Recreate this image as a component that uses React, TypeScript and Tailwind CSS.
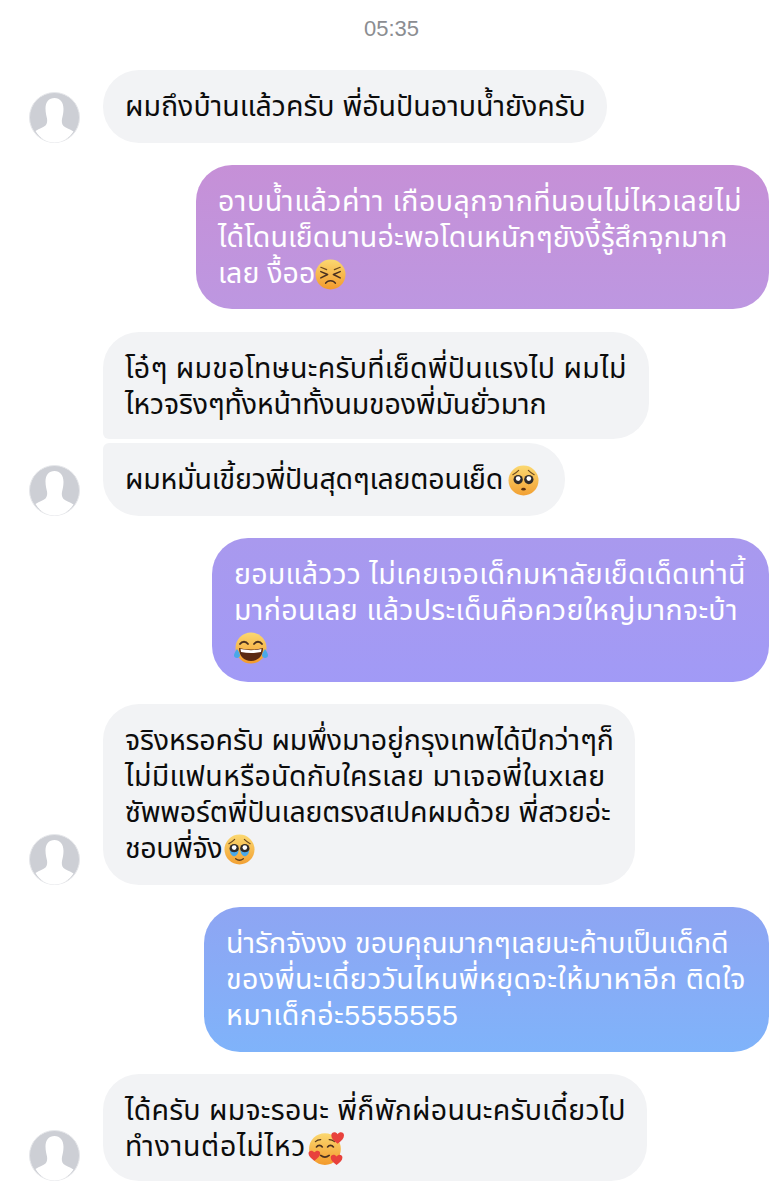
import type { ReactNode } from "react";

function Avatar() {
  return (
    <svg viewBox="0 0 51 51" className="w-[51px] h-[51px] shrink-0">
      <circle cx="25.5" cy="25.5" r="25" fill="#cdcfd5" stroke="#e6e7ea" strokeWidth="1" />
      <path
        d="M25.5 6c-5.500 0-9 4-9 10.500 0 4.500 1 7.500 1.500 10 .4 2.500.2 5-1.500 7-2 2-6 3-10 5.500C10.500 46 17.500 50.500 25.500 50.500S40.500 46 44.500 39.500c-4-2.500-8-3.500-10-5.500-1.700-2-1.900-4.500-1.500-7 .5-2.500 1.500-5.500 1.500-10C34.500 10 31 6 25.500 6z"
        fill="#fff"
      />
    </svg>
  );
}

function Persevere() {
  return (
    <svg viewBox="0 0 32 32" className="inline-block w-[31px] h-[31px] align-[-7px]">
      <defs>
        <linearGradient id="face1" x1="0" y1="0" x2="0" y2="1">
          <stop offset="0" stopColor="#fbd870" />
          <stop offset="1" stopColor="#f39a2c" />
        </linearGradient>
      </defs>
      <circle cx="16" cy="16" r="15.500" fill="url(#face1)" />
      <path d="M6 8.500l6 2.500M26 8.500l-6 2.500" fill="none" stroke="#6b4a20" strokeWidth="1.200" strokeLinecap="round" />
      <path d="M6 13l7 3-7 3.500M26 13l-7 3 7 3.500M11 25c2-3.500 8-3.500 10 0" fill="none" stroke="#4a3020" strokeWidth="1.600" strokeLinecap="round" strokeLinejoin="round" />
    </svg>
  );
}

function Pleading({ tears }: { tears?: boolean }) {
  return (
    <svg viewBox="0 0 32 32" className={`inline-block w-[31px] h-[31px] align-[-7px] ${tears ? "ml-[2px]" : "ml-[5px]"}`}>
      <defs>
        <linearGradient id="face2" x1="0" y1="0" x2="0" y2="1">
          <stop offset="0" stopColor="#fbd870" />
          <stop offset="1" stopColor="#f2a033" />
        </linearGradient>
      </defs>
      <circle cx="16" cy="16" r="15.500" fill="url(#face2)" />
      <path d="M5 10c2-1 4-2.500 6-4.500M27 10c-2-1-4-2.500-6-4.500" fill="none" stroke="#6b4a20" strokeWidth="1.200" strokeLinecap="round" />
      <circle cx="10.500" cy="15" r="4.800" fill="#2e2a2a" />
      <circle cx="21.500" cy="15" r="4.800" fill="#2e2a2a" />
      <circle cx="10.500" cy="14" r="2.400" fill="#fff" />
      <circle cx="21.500" cy="14" r="2.400" fill="#fff" />
      {tears ? (
        <>
          <path d="M6 16.500c2 3 7 3 9 0 0 4-2.500 6.500-4.500 6.500S6 20.500 6 16.500zM17 16.500c2 3 7 3 9 0 0 4-2.500 6.500-4.500 6.500S17 20.500 17 16.500z" fill="#4aa8e8" />
          <path d="M12 25.500c2.500 2 5.500 2 8 0" fill="none" stroke="#5a3a1a" strokeWidth="1.300" strokeLinecap="round" />
        </>
      ) : (
        <ellipse cx="16" cy="25" rx="2.300" ry="1.400" fill="#5a3010" />
      )}
    </svg>
  );
}

function Joy() {
  return (
    <svg viewBox="0 0 34 32" className="inline-block w-[34px] h-[32px] align-[-8px]">
      <defs>
        <linearGradient id="face3" x1="0" y1="0" x2="0" y2="1">
          <stop offset="0" stopColor="#fbd870" />
          <stop offset="1" stopColor="#f39a2c" />
        </linearGradient>
      </defs>
      <circle cx="17" cy="16" r="15.500" fill="url(#face3)" />
      <path d="M6 12c2-3 6-3 8 0M20 12c2-3 6-3 8 0" fill="none" stroke="#4a3020" strokeWidth="1.800" strokeLinecap="round" />
      <path d="M5 16c8 2 16 2 24 0 0 8-5 13-12 13S5 24 5 16z" fill="#5b2a12" />
      <path d="M6.500 17c7 1.500 14 1.500 21 0l-.5 3c-6.500 1.300-13.500 1.300-20 0z" fill="#fff" />
      <path d="M3 17c-2 3-3 5-3 6.500C0 25 1.300 26 3 26s3-1 3-2.500c0-2-1.500-4.500-3-6.500zM31 17c2 3 3 5 3 6.500 0 1.500-1.300 2.500-3 2.500s-3-1-3-2.500c0-2 1.500-4.500 3-6.500z" fill="#4aa8e8" />
    </svg>
  );
}

function Hearts() {
  return (
    <svg viewBox="0 0 34 34" className="inline-block w-[36px] h-[36px] align-[-10px] ml-[2px]">
      <defs>
        <linearGradient id="face4" x1="0" y1="0" x2="0" y2="1">
          <stop offset="0" stopColor="#fbd870" />
          <stop offset="1" stopColor="#f39a2c" />
        </linearGradient>
      </defs>
      <circle cx="16" cy="18" r="15" fill="url(#face4)" />
      <path d="M8 16c1.500-2 4-2 5.500 0M18.500 16c1.500-2 4-2 5.500 0" fill="none" stroke="#4a3020" strokeWidth="1.600" strokeLinecap="round" />
      <path d="M7 11c1.500-1.500 3-2 5-2M25 11c-1.500-1.500-3-2-5-2" fill="none" stroke="#5a3a1a" strokeWidth="1.200" strokeLinecap="round" />
      <path d="M12 24c2.500 2 5.500 2 8 0" fill="none" stroke="#4a3020" strokeWidth="1.600" strokeLinecap="round" />
      <path d="M28 13c-4-3-6-5-6-8 0-3 4-4 6-1 2-3 6-2 6 1 0 3-2 5-6 8z" fill="#e8413c" />
      <path d="M6 29c-3.500-2.500-5.500-4.500-5.500-7 0-2.700 3.500-3.500 5.500-1 2-2.500 5.500-1.700 5.500 1 0 2.500-2 4.500-5.500 7z" fill="#e8413c" />
      <path d="M27 33c-3.500-2.500-5.500-4.500-5.500-7 0-2.700 3.500-3.500 5.500-1 2-2.500 5.500-1.700 5.500 1 0 2.500-2 4.500-5.500 7z" fill="#e8413c" />
    </svg>
  );
}

function Incoming({ children, avatar = true, corner = "", size }: { children: ReactNode; avatar?: boolean; corner?: string; size: string }) {
  return (
    <div className="flex items-end pl-[29px] gap-[23px]">
      {avatar ? <Avatar /> : <div className="w-[51px] shrink-0" />}
      <div className={`bg-[#f2f3f5] text-[#0c0c0c] rounded-[36px] px-[22px] pt-[18px] ${size} ${corner}`}>
        {children}
      </div>
    </div>
  );
}

function Outgoing({ children, colors, size }: { children: ReactNode; colors: string; size: string }) {
  return (
    <div className="flex justify-end pr-[14px]">
      <div className={`bg-gradient-to-b ${colors} text-white rounded-[36px] px-[22px] pt-[18px] ${size}`}>
        {children}
      </div>
    </div>
  );
}

export default function App() {
  return (
    <div className="w-full h-[1200px] overflow-hidden bg-white text-[28.5px] leading-[36px] whitespace-nowrap font-['Liberation_Sans','Noto_Sans_Thai',sans-serif]">
      <div className="pt-[17px] h-[70px] text-center text-[22px] leading-[24px] text-[#8b8d91]">05:35</div>

      <Incoming size="w-[504px] h-[73px]">ผมถึงบ้านแล้วครับ พี่อันปันอาบน้ำยังครับ</Incoming>

      <div className="mt-[22px]">
        <Outgoing size="w-[573px] h-[144px]" colors="from-[#c690d7] to-[#bd97e1]">
          <div className="tracking-[0.5px]">อาบน้ำแล้วค่าา เกือบลุกจากที่นอนไม่ไหวเลยไม่</div>
          <div className="tracking-[0.13px]">ได้โดนเย็ดนานอ่ะพอโดนหนักๆยังงี้รู้สึกจุกมาก</div>
          <div className="h-[36px]">เลย งื้ออ<Persevere /></div>
        </Outgoing>
      </div>

      <div className="mt-[23px]">
        <Incoming avatar={false} size="w-[546px] h-[107px]" corner="rounded-bl-[6px]">
          <div className="tracking-[0.28px]">โอ๋ๆ ผมขอโทษนะครับที่เย็ดพี่ปันแรงไป ผมไม่</div>
          <div className="tracking-[-0.17px]">ไหวจริงๆทั้งหน้าทั้งนมของพี่มันยั่วมาก</div>
        </Incoming>
      </div>

      <div className="mt-[4px]">
        <Incoming size="w-[462px] h-[73px]" corner="rounded-tl-[6px]">
          <div className="h-[36px] tracking-[-0.2px]">ผมหมั่นเขี้ยวพี่ปันสุดๆเลยตอนเย็ด<Pleading /></div>
        </Incoming>
      </div>

      <div className="mt-[22px]">
        <Outgoing size="w-[557px] h-[144px]" colors="from-[#a999ee] to-[#a19af6]">
          <div className="tracking-[0.26px]">ยอมแล้ววว ไม่เคยเจอเด็กมหาลัยเย็ดเด็ดเท่านี้</div>
          <div className="tracking-[0.35px]">มาก่อนเลย แล้วประเด็นคือควยใหญ่มากจะบ้า</div>
          <div className="h-[36px]"><Joy /></div>
        </Outgoing>
      </div>

      <div className="mt-[22px]">
        <Incoming size="w-[532px] h-[181px]">
          <div className="tracking-[-0.14px]">จริงหรอครับ ผมพึ่งมาอยู่กรุงเทพได้ปีกว่าๆก็</div>
          <div className="tracking-[0.32px]">ไม่มีแฟนหรือนัดกับใครเลย มาเจอพี่ในxเลย</div>
          <div className="tracking-[-0.2px]">ซัพพอร์ตพี่ปันเลยตรงสเปคผมด้วย พี่สวยอ่ะ</div>
          <div className="h-[36px] tracking-[-0.4px]">ชอบพี่จัง<Pleading tears /></div>
        </Incoming>
      </div>

      <div className="mt-[22px]">
        <Outgoing size="w-[565px] h-[145px]" colors="from-[#8ea5f3] to-[#7fb3fa]">
          <div>น่ารักจังงง ขอบคุณมากๆเลยนะค้าบเป็นเด็กดี</div>
          <div className="tracking-[0.5px]">ของพี่นะเดี๋ยววันไหนพี่หยุดจะให้มาหาอีก ติดใจ</div>
          <div className="tracking-[0.45px]">หมาเด็กอ่ะ5555555</div>
        </Outgoing>
      </div>

      <div className="mt-[22px]">
        <Incoming size="w-[544px] h-[107px]">
          <div className="tracking-[0.25px]">ได้ครับ ผมจะรอนะ พี่ก็พักผ่อนนะครับเดี๋ยวไป</div>
          <div className="h-[36px] tracking-[0.7px]">ทำงานต่อไม่ไหว<Hearts /></div>
        </Incoming>
      </div>
    </div>
  );
}
